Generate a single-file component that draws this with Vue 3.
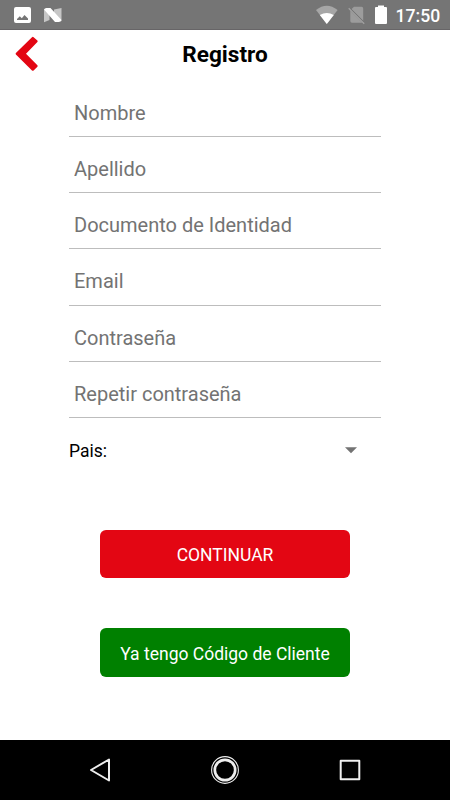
<script setup>
import { reactive } from 'vue'

const fields = reactive([
  { id: 'nombre', label: 'Nombre', type: 'text', value: '' },
  { id: 'apellido', label: 'Apellido', type: 'text', value: '' },
  { id: 'documento', label: 'Documento de Identidad', type: 'text', value: '' },
  { id: 'email', label: 'Email', type: 'email', value: '' },
  { id: 'clave', label: 'Contraseña', type: 'password', value: '' },
  { id: 'clave2', label: 'Repetir contraseña', type: 'password', value: '' },
])
</script>

<template>
  <div class="screen">
    <div class="status">
      <svg class="status-left" width="80" height="30" viewBox="0 0 80 30">
        <path fill="#fff" fill-rule="evenodd" d="M16 7h13q2 0 2 2v12q0 2-2 2H16q-2 0-2-2V9q0-2 2-2zM17 20h11v-1.500l-3.500-3.500-2.700 3.200-2-1.900L17 19z" />
        <path fill="#c6c6c6" d="M44 9l5.500 4v7L44 22.300zM61.500 8v13.200L54 16V9.500z" />
        <path fill="#fff" d="M44 9.500q.8-1.800 3-1.500h3.500L61.500 20q-.5 2-3 1.900h-3.500z" />
      </svg>
      <div class="status-right">
        <svg width="80" height="30" viewBox="0 0 80 30">
          <path fill="#a6a6a6" d="M6 10Q16.800 1.500 27.600 10L16.800 24z" />
          <path fill="#fff" d="M9.800 15Q16.800 11 23.800 15L16.800 24z" />
          <path fill="#9c9c9c" d="M44 6.700h7.500q1.700 0 1.700 1.700v12.800L41.300 9.200zM40.300 10.800L52.300 22.700h-10.300q-1.700 0-1.700-1.700z" />
          <path stroke="#a0a0a0" stroke-width="1.300" fill="none" d="M38.700 8.200l15.500 15.500" />
          <path stroke="#757575" stroke-width="1" fill="none" d="M40.500 8.400l13.500 13.500" />
          <path fill="#fff" d="M68 5.500h6V7h2q1 0 1 1v15q0 1-1 1H66q-1 0-1-1V8q0-1 1-1h2z" />
        </svg>
        <span class="clock">17:50</span>
      </div>
    </div>

    <header class="header">
      <svg class="back" width="26" height="36" viewBox="0 0 26 36">
        <path d="M19 1.200Q19.800.500 20.600 1.200L24.400 4.500Q25 5.200 24.400 5.900L13 17.700l11.400 11.600Q25 30 24.400 30.700L20.600 34.500Q19.800 35 19 34.400L2.900 18.500Q2.300 17.700 2.900 16.900z" fill="#e30613" />
      </svg>
      <h1 class="title">Registro</h1>
    </header>

    <form class="form" @submit.prevent>
      <input
        v-for="field in fields"
        :key="field.id"
        v-model="field.value"
        class="field"
        :type="field.type"
        :placeholder="field.label"
      />
      <div class="country">
        <span>Pais:</span>
        <svg width="12" height="7" viewBox="0 0 12 7"><path d="M0 .2h12L6 6.200z" fill="#737373" /></svg>
      </div>
      <div class="actions">
        <button class="btn continue" type="submit">CONTINUAR</button>
        <button class="btn client" type="button">Ya tengo Código de Cliente</button>
      </div>
    </form>

    <nav class="nav">
      <svg width="30" height="30" viewBox="0 0 30 30" fill="none" stroke="#eee" stroke-width="2" stroke-linejoin="round">
        <path d="M24 4.500v21L6 15z" />
      </svg>
      <svg width="30" height="30" viewBox="0 0 30 30" fill="none" stroke="#eee">
        <circle cx="15" cy="15" r="13.400" stroke-width="1.100" />
        <circle cx="15" cy="15" r="10.200" stroke-width="2.700" />
      </svg>
      <svg width="30" height="30" viewBox="0 0 30 30" fill="none" stroke="#eee" stroke-width="2" stroke-linejoin="round">
        <path d="M5.700 5.800h18.600v18.400H5.700z" />
      </svg>
    </nav>
  </div>
</template>

<style>
body {
  margin: 0;
}
</style>

<style scoped>
.screen {
  width: 450px;
  height: 800px;
  display: flex;
  flex-direction: column;
  background: #fff;
  font-family: Roboto, sans-serif;
  overflow: hidden;
}
.status {
  box-sizing: border-box;
  height: 30px;
  flex: none;
  display: flex;
  justify-content: space-between;
  background: #757575;
  border-bottom: 1px solid #676567;
}
.status svg {
  flex: none;
}
.status-right {
  display: flex;
  width: 140px;
}
.clock {
  color: #fff;
  font-size: 17.600px;
  font-weight: 500;
  line-height: 32px;
  padding-left: 5.500px;
}
.header {
  height: 50.500px;
  flex: none;
  display: grid;
  grid-template-columns: 40px 1fr 40px;
}
.back {
  margin: 6px 0 0 13px;
}
.title {
  margin: 0;
  text-align: center;
  font-size: 22.600px;
  font-weight: 700;
  line-height: 50px;
  color: #000;
}
.form {
  width: 312px;
  margin: 0 auto;
  flex: 1;
  display: flex;
  flex-direction: column;
}
.field {
  box-sizing: border-box;
  width: 100%;
  height: 56.250px;
  flex: none;
  margin: 0;
  padding: 9px 5px 0;
  border: 0;
  border-bottom: 1px solid #bdbdbd;
  border-radius: 0;
  outline: 0;
  background: transparent;
  color: #000;
  font: 400 20px Roboto, sans-serif;
}
.field::placeholder {
  color: #737373;
  opacity: 1;
}
.country {
  height: 65.500px;
  flex: none;
  display: flex;
  align-items: center;
  justify-content: space-between;
  padding-right: 24px;
  font-size: 17.500px;
  color: #000;
}
.actions {
  display: flex;
  flex-direction: column;
  gap: 50px;
  padding: 46px 31px 0;
}
.btn {
  height: 48.500px;
  padding: 2px 0 0;
  border: 0;
  border-radius: 6px;
  color: #fff;
  font: 400 17.500px Roboto, sans-serif;
}
.continue {
  background: #e30613;
}
.client {
  padding-top: 3px;
  background: #008000;
}
.nav {
  height: 60px;
  flex: none;
  display: flex;
  align-items: center;
  justify-content: space-between;
  padding: 0 85px;
  box-sizing: border-box;
  background: #000;
}
</style>
